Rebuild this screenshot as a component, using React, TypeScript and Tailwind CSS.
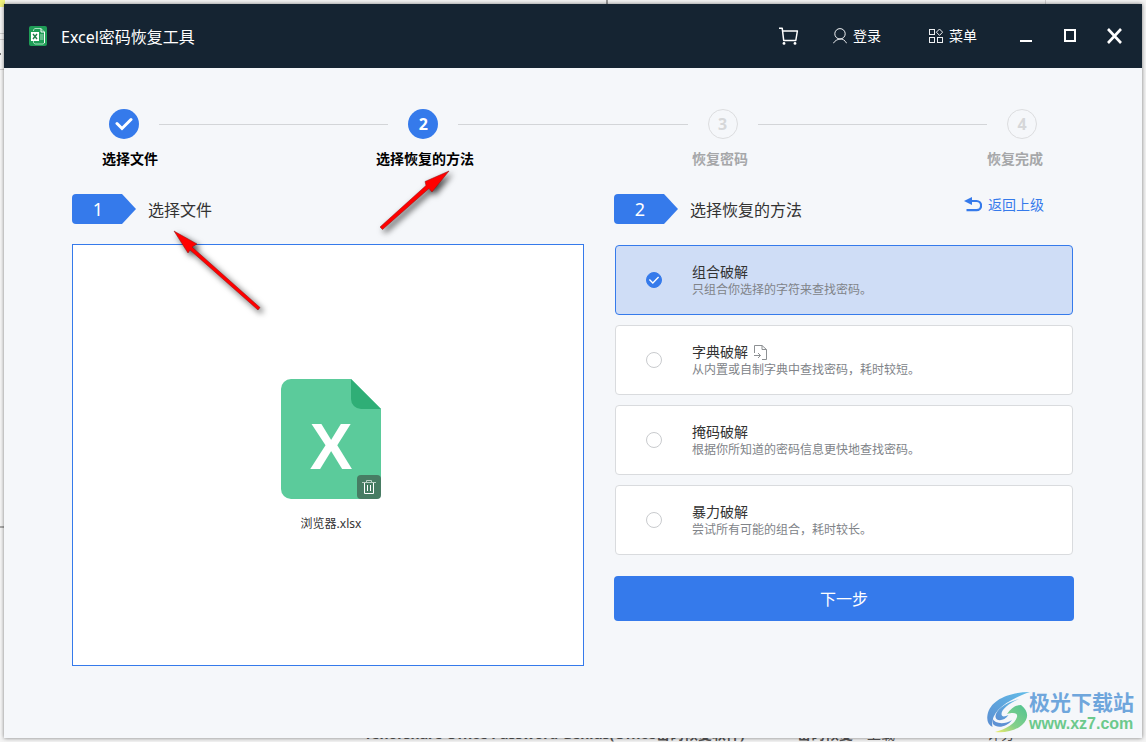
import { useState } from "react";
import { clsx } from "clsx";

const METHODS = [
  { id: "combo", title: "组合破解", desc: "只组合你选择的字符来查找密码。" },
  { id: "dict", title: "字典破解", desc: "从内置或自制字典中查找密码，耗时较短。", importable: true },
  { id: "mask", title: "掩码破解", desc: "根据你所知道的密码信息更快地查找密码。" },
  { id: "brute", title: "暴力破解", desc: "尝试所有可能的组合，耗时较长。" },
];

export default function App() {
  const [method, setMethod] = useState("combo");

  return (
    <div className="flex min-h-screen flex-col bg-[#f4f4f4] font-['Noto_Sans','Noto_Sans_CJK_SC',sans-serif] text-[#333]">
      {/* Page behind the window, only its edges show */}
      <div className="flex h-1 justify-between overflow-hidden bg-[#f3f3f3]">
        <span className="w-[5px] bg-[#eef07c]" />
        <span className="ml-[164px] w-0.5 bg-[#999]" />
        <span className="mr-[100px] w-px bg-[#cfcfcf]" />
      </div>

      <div className="flex flex-1">
        <div className="flex w-1 flex-col bg-[#f7f7f7]">
          <span className="h-[3px] bg-[#eef07c]" />
          <span className="mt-[26px] h-px bg-[#cfcfcf]" />
          <span className="mt-[5px] h-px bg-[#cfcfcf]" />
          <span className="mt-[13px] h-0.5 w-px bg-[#777]" />
          <span className="mt-[14px] h-px bg-[#cfcfcf]" />
          <span className="mt-[456px] h-0.5 bg-[#aaa]" />
        </div>

        <div className="relative flex flex-1 flex-col bg-[#f5f7fa] shadow-[0_0_4px_rgba(0,0,0,0.5)]">
          <TitleBar />

          <main className="flex flex-1 flex-col px-[68px] pt-[41px] pb-[72px]">
            <Stepper />

            <div className="mt-[25px] grid flex-1 grid-cols-[512fr_460fr] gap-[30px]">
              <section className="flex flex-col gap-5">
                <SectionTitle num={1} text="选择文件" />
                <div className="flex min-h-[400px] flex-1 flex-col items-center justify-center border border-[#357aeb] bg-white pl-1.5">
                  <FileIcon />
                  <p className="mt-[17px] text-xs leading-4">浏览器.xlsx</p>
                </div>
              </section>

              <section className="flex flex-col gap-5">
                <div className="flex items-start justify-between pr-[30px]">
                  <SectionTitle num={2} text="选择恢复的方法" />
                  <a href="#" className="flex h-[22px] items-center gap-1.5 text-sm text-[#357aeb]">
                    <BackIcon />
                    返回上级
                  </a>
                </div>

                <form className="flex flex-col" onSubmit={(e) => e.preventDefault()}>
                  <div className="flex flex-col gap-2.5 p-px">
                    {METHODS.map((m) => (
                      <label
                        key={m.id}
                        className={clsx(
                          "flex h-[70px] items-center gap-[30px] rounded border pl-[30px]",
                          method === m.id ? "border-[#357aeb] bg-[#cfddf6]" : "border-[#d9dbde] bg-white"
                        )}
                      >
                        <span className="grid place-items-center">
                          <input
                            type="radio"
                            name="method"
                            checked={method === m.id}
                            onChange={() => setMethod(m.id)}
                            className="col-start-1 row-start-1 size-4 appearance-none rounded-full border border-[#c9cbce] bg-white checked:border-[#357aeb] checked:bg-[#357aeb]"
                          />
                          {method === m.id && (
                            <svg viewBox="0 0 16 16" className="pointer-events-none col-start-1 row-start-1 size-4">
                              <path d="M3.4 7.6 6.8 10.9 12.6 5.1" fill="none" stroke="#fff" strokeWidth="1.4" />
                            </svg>
                          )}
                        </span>
                        <span className="flex flex-col">
                          <span className="flex items-center gap-1.5 text-sm leading-5">
                            {m.title}
                            {m.importable && <ImportIcon />}
                          </span>
                          <span className="text-xs leading-4 text-[#808388]">{m.desc}</span>
                        </span>
                      </label>
                    ))}
                  </div>
                  <button type="submit" className="mt-5 h-[45px] rounded bg-[#357aeb] text-base text-white">
                    下一步
                  </button>
                </form>
              </section>
            </div>
          </main>

          <Arrows />
          <Watermark />
        </div>

        <div className="w-1" />
      </div>

      <div className="flex h-1 items-end overflow-hidden pl-[364px] text-sm leading-4 whitespace-nowrap text-[#555]">
        <b className="w-[433px]">Tenorshare Office Password Genius(Office密码恢复软件)</b>
        <b className="w-[70px]">密码恢复</b>
        <span className="w-[120px]">上载</span>
        <span>评分</span>
      </div>
    </div>
  );
}

function TitleBar() {
  return (
    <header className="flex h-16 items-center bg-[#152432] pr-5 pl-[25px] text-white">
      <svg viewBox="0 0 18 20" className="h-5 w-[18px]">
        <rect width="18" height="20" rx="2" fill="#1f9d57" />
        <path d="M4.5 5V3.7L6 2.5h6l3.5 3.5v11L14 18H6l-1.5-1.2V15" fill="none" stroke="#a9dcbf" strokeWidth="1" />
        <path d="M12 2.5V6h3.5v11" fill="none" stroke="#fff" strokeWidth="1" />
        <path d="M11 9h3.5M11 11h3.5M11 13h3.5" stroke="#a9dcbf" />
        <rect x="2" y="6" width="8" height="9" fill="#fff" />
        <path d="m4 8 4 5M8 8l-4 5" stroke="#1f7d49" strokeWidth="1.4" />
      </svg>
      <h1 className="ml-3.5 flex-1 pt-0.5 text-base">Excel密码恢复工具</h1>

      <button type="button" aria-label="购物车">
        <svg viewBox="0 0 20 18" className="h-[18px] w-5" fill="none" stroke="#fff" strokeWidth="1.5">
          <path d="M0 1.2h3.2L4.7 13.5H16.8L18.4 4H3.6" strokeLinejoin="round" />
          <circle cx="5" cy="16.4" r="1.4" fill="#fff" stroke="none" />
          <circle cx="16" cy="16.4" r="1.4" fill="#fff" stroke="none" />
        </svg>
      </button>
      <button type="button" className="ml-[34px] flex items-center gap-1.5 text-sm">
        <svg viewBox="0 0 14 16" className="h-4 w-3.5" fill="none" stroke="#eef0f2">
          <circle cx="7" cy="5.8" r="5.2" />
          <path d="M.3 15.3C2 12.5 4.3 11.5 7 11s5 1.5 6.7 4.3" />
        </svg>
        登录
      </button>
      <button type="button" className="ml-12 flex items-center gap-1.5 text-sm">
        <svg viewBox="0 0 14 14" className="size-3.5" fill="none" stroke="#eef0f2">
          <rect x=".5" y=".5" width="5" height="5" />
          <rect x=".5" y="8.5" width="5" height="5" />
          <rect x="8.5" y="8.5" width="5" height="5" />
          <path d="M10.5 0 13.6 3.2 10.5 6.4 7.4 3.2z" />
        </svg>
        菜单
      </button>
      <button type="button" aria-label="最小化" className="ml-[43px]">
        <svg viewBox="0 0 12 14" className="h-3.5 w-3">
          <path d="M0 12h12" stroke="#fff" strokeWidth="2" />
        </svg>
      </button>
      <button type="button" aria-label="最大化" className="ml-8">
        <svg viewBox="0 0 12 14" className="h-3.5 w-3">
          <rect x="1" y="1" width="10" height="11" fill="none" stroke="#fff" strokeWidth="2" />
        </svg>
      </button>
      <button type="button" aria-label="关闭" className="ml-[31px]">
        <svg viewBox="0 0 15 16" className="h-4 w-[15px]">
          <path d="m1 1 13 14M14 1 1 15" stroke="#fff" strokeWidth="2.6" />
        </svg>
      </button>
    </header>
  );
}

function Stepper() {
  return (
    <div>
      <div className="flex items-center gap-5 px-[37px] font-bold">
        <span className="grid size-[30px] place-items-center rounded-full bg-[#357aeb]">
          <svg viewBox="0 0 18 14" className="h-3.5 w-[18px]">
            <path d="m2 6.5 5 5 9-9" fill="none" stroke="#fff" strokeWidth="3" strokeLinecap="round" />
          </svg>
        </span>
        <Line />
        <span className="grid size-[30px] place-items-center rounded-full bg-[#357aeb] text-white">2</span>
        <Line />
        <span className="grid size-[30px] place-items-center rounded-full border border-[#dcdddf] text-[#d6d7d9]">3</span>
        <Line />
        <span className="grid size-[30px] place-items-center rounded-full border border-[#dcdddf] text-[#d6d7d9]">4</span>
      </div>
      <div className="mt-2.5 grid grid-cols-[274fr_316fr_295fr_56px] pr-[31px] pl-[30px] text-sm leading-5 font-bold text-[#a6a7a9]">
        <span className="text-black">选择文件</span>
        <span className="text-black">选择恢复的方法</span>
        <span>恢复密码</span>
        <span>恢复完成</span>
      </div>
    </div>
  );
}

function Line() {
  return <span className="h-px flex-1 bg-[#d3d5d8]" />;
}

function SectionTitle({ num, text }: { num: number; text: string }) {
  return (
    <div className="flex h-[30px] items-center gap-3">
      <span className="grid h-[30px] w-16 place-items-center rounded-l-sm bg-[#357aeb] pr-3 text-lg text-white [clip-path:polygon(0_0,50px_0,100%_50%,50px_100%,0_100%)]">
        {num}
      </span>
      <h2 className="pt-0.5 text-base">{text}</h2>
    </div>
  );
}

function FileIcon() {
  return (
    <div className="relative">
      <svg viewBox="0 0 100 120" className="h-[120px] w-[100px]">
        <path d="M10 0h60l30 30v82a8 8 0 0 1-8 8H10a10 10 0 0 1-10-10V10A10 10 0 0 1 10 0z" fill="#5bcb9b" />
        <path d="M70 0v20a10 10 0 0 0 10 10h20z" fill="#2fae76" />
        <text x="50" y="90" textAnchor="middle" fill="#fff" fontSize="64" fontWeight="700" fontFamily="Liberation Sans, sans-serif">
          X
        </text>
      </svg>
      <button
        type="button"
        aria-label="删除"
        className="absolute right-0 bottom-0 grid size-6 place-items-center rounded bg-[#477c63]"
      >
        <svg viewBox="0 0 14 16" className="h-4 w-3.5" fill="none" stroke="#fff">
          <path d="M0 3.5h14M4.5 3V1.5h5V3" stroke="#b9cfc4" />
          <path d="M2.5 4v10.500h9V4M5.5 6v6M8.5 6v6" />
        </svg>
      </button>
    </div>
  );
}

function BackIcon() {
  return (
    <svg viewBox="0 0 18 16" className="h-4 w-[18px]">
      <path d="M6 4h6.5a4.5 4.5 0 0 1 0 9.200H2.5" fill="none" stroke="#357aeb" strokeWidth="2.2" />
      <path d="M0 4 8 0v8z" fill="#357aeb" />
    </svg>
  );
}

function ImportIcon() {
  return (
    <svg viewBox="0 0 13 15" className="h-[15px] w-[13px]" fill="none" stroke="#8d9093">
      <path d="M.5 8V.5H8l4.5 4v10H8M8 .5v4h4.5" />
      <path d="M0 10.5h6.500M4 8l2.500 2.500L4 13" />
    </svg>
  );
}

// Hand-drawn pointers laid over the window
function Arrows() {
  return (
    <svg
      viewBox="0 0 300 160"
      className="pointer-events-none absolute top-[161px] left-[161px] h-[160px] w-[300px] drop-shadow-[3px_3px_3px_rgba(0,0,0,0.75)]"
    >
      <g fill="#f00" stroke="#8a1010" strokeWidth="0.5">
        <path d="M9 66 32 79l-5 3L95 142.500l-2 2.500L25 85l-2 3z" />
        <path d="M284 6 267 27l-3-3.500L217.500 64.500l-2.500-2.500 46-41.500-1-4z" />
      </g>
    </svg>
  );
}

function Watermark() {
  return (
    <div className="absolute right-2 bottom-1 flex items-center whitespace-nowrap">
      <svg viewBox="0 0 46 42" className="h-[42px] w-[46px]">
        <defs>
          <linearGradient id="wave" x1="1" y1="0" x2="0" y2="1">
            <stop offset="0" stopColor="#62bde8" />
            <stop offset="1" stopColor="#5b8ed2" />
          </linearGradient>
          <linearGradient id="leaf" x1="1" y1="0" x2="0" y2="1">
            <stop offset="0" stopColor="#4fc391" />
            <stop offset=".6" stopColor="#86d08a" />
            <stop offset="1" stopColor="#f2ee6a" />
          </linearGradient>
        </defs>
        {/* outer sweep, inner curl, green tail */}
        <path d="M45 1C24 1 5 9 2.5 24c-1 6 1 10 5 12C5 24 16 11 45 1z" fill="url(#wave)" />
        <path d="M34 8C19 12 10 20 10.5 26c1 5 9 4 13-2-4 2-7 2-7-1 0-5 8-11 17.5-15z" fill="url(#wave)" />
        <path d="M36 14c8 6 8 14 1 20-7 6-17 8-27 7 11-3 20-8 22-15 1-4-3-5-10-3 4-6 9-9 14-9z" fill="url(#leaf)" />
        <path d="M7 27c3 6 12 7 20 2-5 7-15 9-19 4z" fill="#5d91d4" />
      </svg>
      <div className="-ml-0.5">
        <p className="text-[21px] leading-6 font-bold text-[#6fa6dc]">极光下载站</p>
        <p className="font-['Liberation_Sans',sans-serif] text-base leading-5 font-bold text-[#6bc98c]">www.xz7.com</p>
      </div>
    </div>
  );
}
